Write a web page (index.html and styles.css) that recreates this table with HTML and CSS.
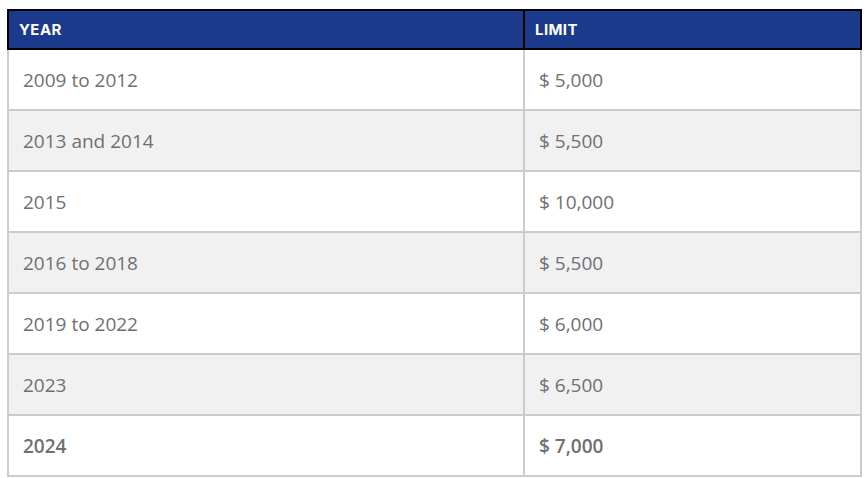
FILE: index.html
```html
<!DOCTYPE html>
<html>
<head>
<meta charset="utf-8">
<link rel="stylesheet" href="styles.css">
</head>
<body>
<table class="limits">
  <thead>
    <tr><th class="c-year">YEAR</th><th class="c-limit">LIMIT</th></tr>
  </thead>
  <tbody>
    <tr><td>2009 to 2012</td><td>$ 5,000</td></tr>
    <tr class="alt"><td>2013 and 2014</td><td>$ 5,500</td></tr>
    <tr><td>2015</td><td>$ 10,000</td></tr>
    <tr class="alt"><td>2016 to 2018</td><td>$ 5,500</td></tr>
    <tr><td>2019 to 2022</td><td>$ 6,000</td></tr>
    <tr class="alt"><td>2023</td><td>$ 6,500</td></tr>
    <tr class="strong"><td>2024</td><td>$ 7,000</td></tr>
  </tbody>
</table>
</body>
</html>
```
FILE: styles.css
```css
html, body {
  margin: 0;
  padding: 0;
  background: #ffffff;
}
body {
  padding: 9px 0 0 7px;
}
.limits {
  border-collapse: collapse;
  width: 855px;
  table-layout: fixed;
  font-family: "Open Sans", "Liberation Sans", sans-serif;
}
.limits th {
  background: #1b3a8b;
  color: #ffffff;
  border: 2px solid #000000;
  font-family: "Inter", "Open Sans", sans-serif;
  font-weight: 700;
  font-size: 15px;
  letter-spacing: 0.4px;
  text-align: left;
  height: 39px;
  padding: 0 0 1px 10px;
  box-sizing: border-box;
}
.limits th.c-year { width: 516px; }
.limits td {
  border: 2px solid #cccccc;
  color: #6d7074;
  font-size: 19px;
  height: 61px;
  padding: 0 0 0 14px;
  box-sizing: border-box;
}
.limits tr.alt td {
  background: #f1f1f1;
}
.limits tr.strong td {
  font-weight: 600;
}
```
